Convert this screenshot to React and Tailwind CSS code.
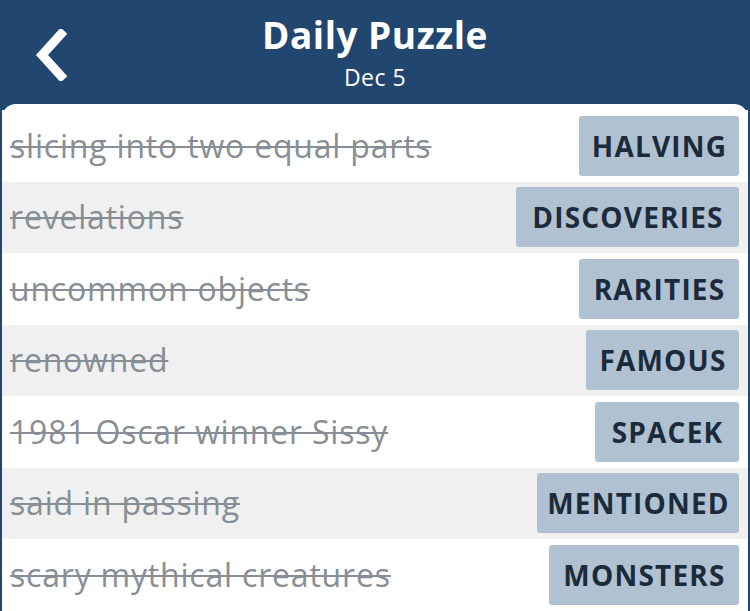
import React from 'react'

const clues = [
  { clue: 'slicing into two equal parts', answer: 'HALVING', w: 'w-[160px]' },
  { clue: 'revelations', answer: 'DISCOVERIES', w: 'w-[223px]' },
  { clue: 'uncommon objects', answer: 'RARITIES', w: 'w-[160px]' },
  { clue: 'renowned', answer: 'FAMOUS', w: 'w-[153px]' },
  { clue: '1981 Oscar winner Sissy', answer: 'SPACEK', w: 'w-[144px]' },
  { clue: 'said in passing', answer: 'MENTIONED', w: 'w-[202px]' },
  { clue: 'scary mythical creatures', answer: 'MONSTERS', w: 'w-[190px]' }
]

const App = () => {
  return (
    <div className="w-[750px] h-[611px] overflow-hidden bg-[#21466f] font-['Open_Sans','Noto_Sans',sans-serif]">
      {/* Header */}
      <div className="relative h-[104px] flex flex-col items-center text-white">
        <button className="absolute left-[31px] top-[28px] w-[40px] h-[54px] flex items-center justify-center">
          <svg width="34" height="52" viewBox="0 0 34 52" fill="none">
            <path d="M27 5 L8 26 L27 47" stroke="white" strokeWidth="9" strokeLinecap="square" strokeLinejoin="miter" />
          </svg>
        </button>
        <h1 className="mt-[10px] text-[37px] leading-[50px] font-bold tracking-[0.5px]">Daily Puzzle</h1>
        <p className="mt-[2px] text-[23px] leading-[30px] tracking-[0.5px]">Dec 5</p>
      </div>

      {/* Clue list */}
      <div className="mx-[2px] rounded-t-[14px] bg-white pt-[6px] h-[507px]">
        {clues.map((item, index) => (
          <div
            key={item.answer}
            className={`h-[71.5px] flex items-center justify-between pl-[8px] pr-[9px] ${
              index % 2 === 1 ? 'bg-[#f0f0f0]' : 'bg-white'
            }`}
          >
            <span className="text-[32px] tracking-[0.8px] text-[#878e96] line-through decoration-[#878e96] decoration-2">
              {item.clue}
            </span>
            <span
              className={`${item.w} h-[60px] flex items-center justify-center rounded-[3px] bg-[#b0c2d2] pl-[1px] text-[28px] font-bold tracking-[1.2px] text-[#1c2b3b]`}
            >
              {item.answer}
            </span>
          </div>
        ))}
      </div>
    </div>
  )
}

export default App
